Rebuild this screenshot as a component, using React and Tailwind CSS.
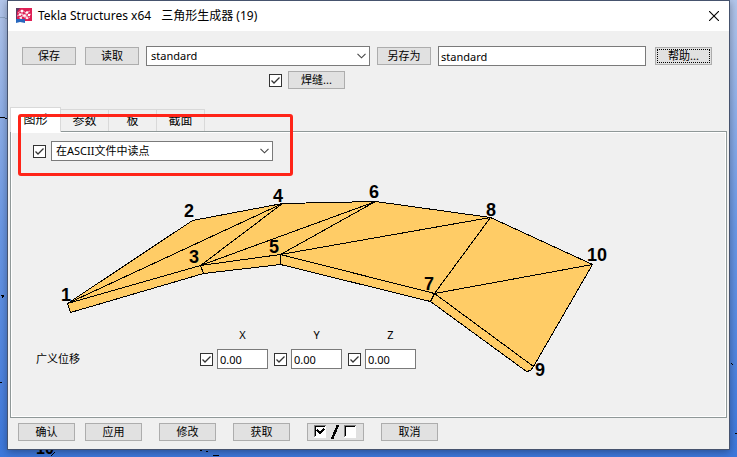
import React, { useState } from 'react';

const toolButton = 'h-[18px] shrink-0 border border-[#adadad] bg-[#e1e1e1] text-[11px] leading-4 text-black hover:border-[#0078d7] hover:bg-[#e5f1fb]';
const field = 'h-5 min-w-0 rounded-none border border-[#7a7a7a] bg-white text-[11px] leading-4 text-black outline-none';

const tabs = ['图形', '参数', '板', '截面'];

// outline first, then the inner edges drawn on top of it
const outline = '67,303 192,220 282,203 375,201 490,217 592,264 533,366 530,370 526,371 430,301 280,264 203,273 70,312';
const edges = [
  'M67 303L282 203L200 265L67 303',
  'M200 265L375 201L280 254L200 265L203 273',
  'M280 264V254L490 217L434 293L280 254',
  'M430 301L434 293L592 264',
  'M434 293L533 366',
];
const nodes = [
  { n: 1, x: 61, y: 301 },
  { n: 2, x: 184, y: 217 },
  { n: 3, x: 189, y: 263 },
  { n: 4, x: 273, y: 202 },
  { n: 5, x: 269, y: 253 },
  { n: 6, x: 369, y: 198 },
  { n: 7, x: 424, y: 290 },
  { n: 8, x: 486, y: 216 },
  { n: 9, x: 535, y: 376 },
  { n: 10, x: 587, y: 261 },
];

const CheckBox = ({ label }) => (
  <span className="grid h-[13px] w-[13px] shrink-0">
    <input
      type="checkbox"
      defaultChecked
      aria-label={label}
      className="peer h-[13px] w-[13px] appearance-none border border-[#333333] bg-white [grid-area:1/1]"
    />
    <svg viewBox="0 0 13 13" className="pointer-events-none invisible h-[13px] w-[13px] [grid-area:1/1] peer-checked:visible">
      <path d="M2.5 6.5L5 9L10.5 3.5" fill="none" stroke="#333" strokeWidth="1.3" />
    </svg>
  </span>
);

const Select = ({ label, className, children }) => (
  <span className={`grid ${className}`}>
    <select aria-label={label} className={`${field} w-full appearance-none pr-6 pl-1 [grid-area:1/1]`}>
      {children}
    </select>
    <svg viewBox="0 0 9 6" className="pointer-events-none mr-1 h-[6px] w-[9px] self-center justify-self-end [grid-area:1/1]">
      <path d="M0.5 0.8L4.5 4.8L8.5 0.8" fill="none" stroke="#444" strokeWidth="1.1" />
    </svg>
  </span>
);

const AxisField = ({ axis }) => (
  <div className="grid grid-cols-[13px_51px] items-center gap-x-1 gap-y-[6px]">
    <label htmlFor={`offset-${axis}`} className="col-start-2 text-center text-[11px] leading-4">{axis}</label>
    <CheckBox label={`${axis} 位移`} />
    <input id={`offset-${axis}`} defaultValue="0.00" className={`${field} w-full px-[2px]`} />
  </div>
);

const Logo = () => (
  <svg viewBox="0 0 16 16" className="h-4 w-4 shrink-0">
    <rect width="16" height="13" fill="#df1f55" />
    <path d="M0 11H9V15L4 14L0 15Z" fill="#2867bd" />
    <path d="M0 0H4L1 4V11H0Z" fill="#603b62" />
    <path d="M2 5L6 2L10 5L14 3M1 8L6 6L10 9L15 6M3 10L7 8L11 11L14 9M6 2L6 6L7 8M10 5V9" fill="none" stroke="#f5cbd4" strokeWidth="0.8" />
    <g fill="#fff">
      <circle cx="6" cy="3" r="1.3" />
      <circle cx="11" cy="4.5" r="1.3" />
      <circle cx="4" cy="6.5" r="1.3" />
      <circle cx="8.5" cy="7.5" r="1.3" />
      <circle cx="13" cy="7" r="1.2" />
      <circle cx="5" cy="10" r="1.1" />
      <circle cx="11" cy="10" r="1.1" />
    </g>
  </svg>
);

const ToggleMarks = () => (
  <svg viewBox="0 0 43 16" className="mx-auto h-4 w-[43px]" shapeRendering="crispEdges">
    <path d="M0 1H12V14H0Z M30 1H42V14H30Z" fill="#fff" />
    <path d="M0.5 13V1.5H12M30.5 13V1.5H42" fill="none" stroke="#808080" />
    <path d="M1.5 12V2.5H11M31.5 12V2.5H41" fill="none" stroke="#000" />
    <path d="M3 6L6 9L10 5" fill="none" stroke="#000" strokeWidth="2" />
    <path d="M18 15L24 1" fill="none" stroke="#000" strokeWidth="2.4" />
  </svg>
);

// the model view that shows around the dialog
const Backdrop = () => (
  <svg className="pointer-events-none absolute inset-0 h-full w-full" shapeRendering="crispEdges">
    <path d="M0 117H3L7 119M0 382H2M1 295H4L2 298M51 456L55 452M199 449L202 451M206 451H208M213 455L219 456M731 363L733 365M735 433H737" fill="none" stroke="#000" />
    <path d="M0 17H3L7 19" fill="none" stroke="#8ba3c4" />
    <text x="36" y="454" className="font-['Liberation_Sans',sans-serif] text-[16px] font-bold">10</text>
  </svg>
);

const Diagram = () => (
  <svg viewBox="50 180 560 200" className="ml-[39px] h-[200px] w-[560px] [grid-area:1/1]">
    <g stroke="#000" strokeWidth="1" shapeRendering="crispEdges" transform="translate(0.5 0.5)">
      <polygon points={outline} fill="#ffcc66" />
      {edges.map((d) => <path key={d} d={d} fill="none" />)}
    </g>
    <g className="font-['Liberation_Sans',Arial,sans-serif] text-[18px] font-bold">
      {nodes.map(({ n, x, y }) => <text key={n} x={x} y={y}>{n}</text>)}
    </g>
  </svg>
);

const App = () => {
  const [active, setActive] = useState(0);

  return (
    <div className="relative min-h-screen bg-gradient-to-b from-[#b3c6eb] via-[#6b98e6] to-[#3d78dc] px-[7px] pb-[7px] font-['Noto_Sans','Noto_Sans_CJK_SC',sans-serif] text-black">
      <Backdrop />
      <main className="relative border border-[#46536e] bg-[#f0f0f0] shadow-[0_2px_8px_rgba(0,0,0,0.35)]">
        <header className="flex h-[30px] items-center bg-white pr-[10px] pl-2">
          <Logo />
          <h1 className="ml-[6px] flex gap-[10px] text-[12px] leading-4">
            <span>Tekla Structures x64</span>
            <span>三角形生成器 (19)</span>
          </h1>
          <button aria-label="关闭" className="ml-auto">
            <svg viewBox="0 0 10 10" className="h-[10px] w-[10px]">
              <path d="M0 0L10 10M10 0L0 10" stroke="#000" strokeWidth="1.1" />
            </svg>
          </button>
        </header>

        <div className="flex items-center gap-[7px] pt-[15px] pr-[17px] pl-[14px]">
          <div className="flex shrink-0 gap-[9px]">
            <button className={`${toolButton} w-[54px]`}>保存</button>
            <button className={`${toolButton} w-[54px]`}>读取</button>
          </div>
          <Select label="设置" className="grow basis-56">
            <option>standard</option>
          </Select>
          <button className={`${toolButton} w-[54px]`}>另存为</button>
          <div className="flex grow basis-[274px] items-center gap-[9px]">
            <input aria-label="另存为名称" defaultValue="standard" className={`${field} grow px-[2px]`} />
            <button className={`${toolButton} w-[57px] p-px`}>
              <span className="block h-[14px] border border-dotted border-black leading-3">帮助...</span>
            </button>
          </div>
        </div>
        <div className="mt-[5px] flex items-center gap-[6px] pl-[261px]">
          <CheckBox label="焊缝" />
          <button className={`${toolButton} w-[57px]`}>焊缝...</button>
        </div>

        <section className="relative mx-[2px] mt-[18px]">
          <div role="tablist" className="relative flex h-6 items-end text-[12px] leading-4">
            {tabs.map((tab, i) => (
              <button
                key={tab}
                role="tab"
                aria-selected={active === i}
                onClick={() => setActive(i)}
                className={active === i
                  ? 'z-10 -mb-px h-[25px] w-[51px] border border-b-0 border-[#d9d9d9] bg-white'
                  : 'h-[22px] w-12 border border-b-0 border-l-0 border-[#d9d9d9] bg-[#f0f0f0]'}
              >
                {tab}
              </button>
            ))}
          </div>
          <div role="tabpanel" className="border border-[#8f9898] pt-[9px] pb-[37px] shadow-[inset_0_0_0_1px_#fff]">
            <div className="flex items-center gap-[5px] pl-[22px]">
              <CheckBox label="输入方式" />
              <Select label="输入方式" className="w-[222px]">
                <option>在ASCII文件中读点</option>
              </Select>
            </div>
            <div className="mt-[19px] grid">
              <Diagram />
              <div className="flex items-end gap-[6px] self-end pb-[11px] pl-[25px] [grid-area:1/1]">
                <span className="w-[158px] text-[11px] leading-5">广义位移</span>
                <AxisField axis="X" />
                <AxisField axis="Y" />
                <AxisField axis="Z" />
              </div>
            </div>
          </div>
          {/* highlight frame over the tabs and the input mode */}
          <div className="pointer-events-none absolute top-[7px] left-2 z-20 h-[62px] w-[275px] rounded-[3px] border-[3px] border-[#ff2418]" />
        </section>

        <footer className="flex gap-[17px] pt-[5px] pb-2 pl-[10px]">
          <div className="flex gap-[10px]">
            <button className={`${toolButton} w-[57px]`}>确认</button>
            <button className={`${toolButton} w-[57px]`}>应用</button>
          </div>
          <button className={`${toolButton} w-[57px]`}>修改</button>
          <button className={`${toolButton} w-[57px]`}>获取</button>
          <button aria-label="全部选择或清除" className={`${toolButton} w-[57px]`}><ToggleMarks /></button>
          <button className={`${toolButton} w-[57px]`}>取消</button>
        </footer>
      </main>
    </div>
  );
};

export default App;
